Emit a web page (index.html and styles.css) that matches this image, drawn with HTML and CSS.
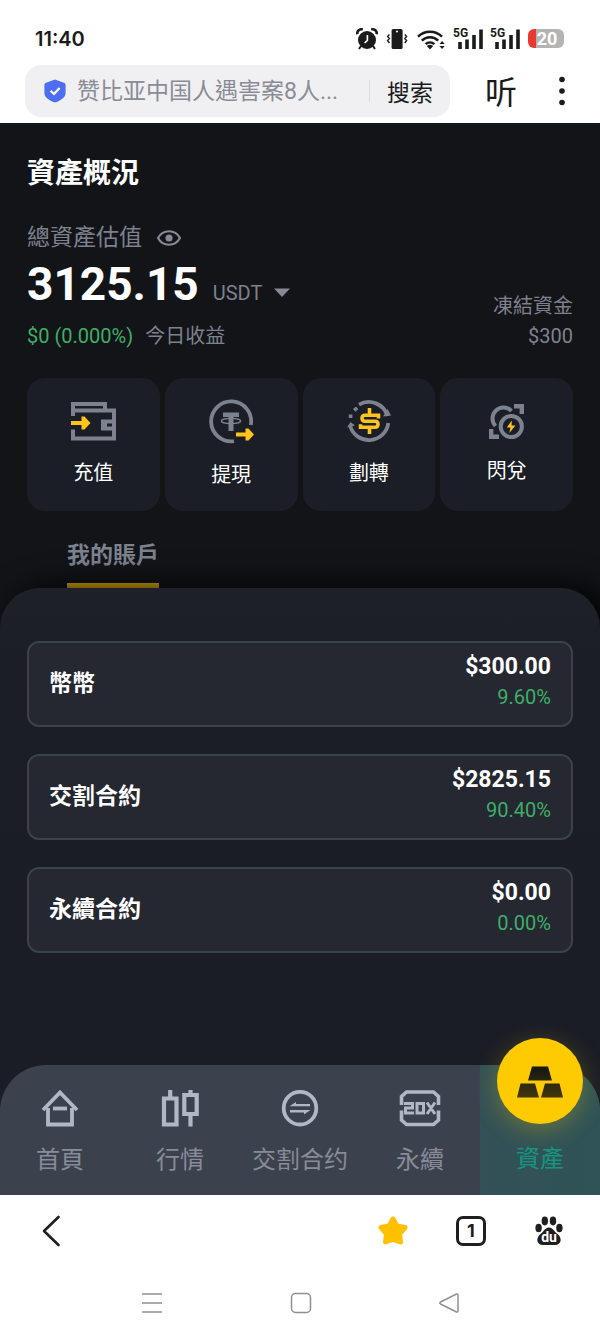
FILE: index.html
```html
<!DOCTYPE html>
<html lang="zh-Hant">
<head>
<meta charset="utf-8">
<meta name="viewport" content="width=device-width, initial-scale=1">
<title>資產概況</title>
<link rel="stylesheet" href="styles.css">
</head>
<body>
<header class="browser-top">
  <div class="status">
    <span class="clock">11:40</span>
    <div class="status-icons">
      <svg width="22" height="22" viewBox="0 0 22 22"><circle cx="11" cy="12" r="9" fill="#1b1b1b"/><path d="M1.400 6.200A4 4 0 0 1 6.800 1.600M20.600 6.200a4 4 0 0 0-5.400-4.600" fill="none" stroke="#1b1b1b" stroke-width="2.600"/><path d="M5 18l-2 3M17 18l2 3" stroke="#1b1b1b" stroke-width="2"/><path d="M11.400 7v5.400L8.600 15" fill="none" stroke="#fff" stroke-width="1.600"/></svg>
      <svg width="22" height="22" viewBox="0 0 22 22"><rect x="5.600" y="1" width="11" height="20" rx="1.600" fill="#1b1b1b"/><circle cx="11" cy="3.600" r="1" fill="#fff"/><path d="M3.400 6.500l-1.800 2 1.800 2-1.800 2 1.800 2.500M18.800 6.500l1.800 2-1.800 2 1.800 2-1.800 2.500" fill="none" stroke="#1b1b1b" stroke-width="1.400"/></svg>
      <svg width="30" height="22" viewBox="0 0 30 22"><path d="M2 8.600a17 17 0 0 1 24 0M5.800 12.600a11.500 11.500 0 0 1 16.400 0M9.600 16.200a6.500 6.500 0 0 1 8.800 0" fill="none" stroke="#1b1b1b" stroke-width="2.500"/><path d="M10.800 18a5 5 0 0 1 6.400 0L14 21.500zM23.500 16l2.600-3 2.600 3zM23.500 18l2.600 3 2.600-3z" fill="#1b1b1b"/></svg>
      <span class="signal"><span class="signal-tag">5G</span><svg width="28" height="22" viewBox="0 0 28 22"><path d="M5 14v7M12 11.500V21M19 7v14M26 1.500V21" stroke="#1b1b1b" stroke-width="3.600"/></svg></span>
      <span class="signal"><span class="signal-tag">5G</span><svg width="28" height="22" viewBox="0 0 28 22"><path d="M5 14v7M12 11.500V21M19 7v14M26 1.500V21" stroke="#1b1b1b" stroke-width="3.600"/></svg></span>
      <span class="battery"><span class="battery-text">20</span></span>
    </div>
  </div>
  <div class="address">
    <form class="search">
      <svg width="24" height="26" viewBox="0 0 24 26"><path d="M12 1.500l9 3.200q1.600.6 1.600 2.200v7.600c0 4.400-3 6.600-8.200 9.200q-2.400 1.200-4.800 0C4.400 21.100 1.400 18.900 1.400 14.500V6.900q0-1.600 1.600-2.200z" fill="#4e6ef2"/><path d="M7.600 12.800l3.400 3.200 5.600-6" fill="none" stroke="#fff" stroke-width="2.200"/></svg>
      <input class="search-input" type="text" aria-label="搜索内容" value="赞比亚中国人遇害案8人...">
      <button class="search-button" type="button">搜索</button>
    </form>
    <button class="listen" type="button">听</button>
    <button class="plain" type="button" aria-label="更多"><svg width="8" height="30" viewBox="0 0 8 30"><g fill="#1b1b1b"><circle cx="4" cy="3.500" r="2.800"/><circle cx="4" cy="15" r="2.800"/><circle cx="4" cy="26.500" r="2.800"/></g></svg></button>
  </div>
</header>

<main class="app">
  <section class="overview">
    <h1 class="title">資產概況</h1>
    <div class="label-row">
      <span>總資產估值</span>
      <button class="plain" type="button" aria-label="顯示金額"><svg width="26" height="18" viewBox="0 0 26 18"><path d="M2 9C7 0 19 0 24 9 19 18 7 18 2 9z" fill="none" stroke="#858a96" stroke-width="2.200"/><circle cx="13" cy="9" r="3.600" fill="#858a96"/></svg></button>
    </div>
    <div class="totals">
      <div class="total-main">
        <div class="amount-row">
          <strong class="amount">3125.15</strong>
          <button class="currency" type="button">USDT <svg width="18" height="10" viewBox="0 0 18 10"><path d="M1 .5h16L9 9z" fill="#858a96"/></svg></button>
        </div>
        <div class="profit"><span class="up">$0 (0.000%)</span><span>今日收益</span></div>
      </div>
      <div class="frozen"><span>凍結資金</span><span>$300</span></div>
    </div>
    <div class="actions">
      <a class="action" href="#deposit">
        <svg class="action-icon" viewBox="0 0 46 46"><g fill="none" stroke="#7d828f" stroke-width="4"><path d="M3 17V5h32v6"/><path d="M3 11.500h41v28H3v-9"/><path d="M44 22.500H33v7h11"/></g><path d="M33 22.500h4v7h-4z" fill="#7d828f"/><path d="M1 22h10.500v-4.500h3l6 6.500-6 6.500h-3V26H1z" fill="#fcc41c"/></svg>
        <span>充值</span>
      </a>
      <a class="action withdraw" href="#withdraw">
        <svg class="action-icon" viewBox="0 0 46 46"><path d="M26 42.200A20 20 0 1 1 42.800 26" fill="none" stroke="#7d828f" stroke-width="3.800"/><path d="M15 13.500h16v4.500h-5.500V32h-5V18H15z" fill="#7d828f"/><ellipse cx="23" cy="22" rx="9.600" ry="2.600" fill="none" stroke="#7d828f" stroke-width="1.400"/><path d="M28 33.500h9.500v-4h3l5.500 6-5.500 6h-3v-4H28z" fill="#fcc41c"/></svg>
        <span>提現</span>
      </a>
      <a class="action" href="#transfer">
        <svg class="action-icon" viewBox="0 0 46 46"><g fill="none" stroke="#7d828f" stroke-width="3.800"><path d="M13 5.600A19.500 19.500 0 0 1 41.500 17"/><path d="M42.300 24A19.500 19.500 0 0 1 4.200 27"/></g><path d="M37 17.500l8-1-3.500-6.500M9 26.500l-8 2L4.500 23z" fill="#7d828f"/><path d="M7 10l3-2.500 2.300 2.700-3 2.500zM2.800 15.500h3.600v3.600H2.800z" fill="#7d828f"/><path d="M32.500 19.500V16.300H19q-3 0-3 3t3 3h10q3 0 3 3t-3 3H14.500v-3M23.500 9v7M23.500 28v7" fill="none" stroke="#fcc41c" stroke-width="3.600"/></svg>
        <span>劃轉</span>
      </a>
      <a class="action swap" href="#swap">
        <svg class="action-icon" viewBox="0 0 46 46"><g fill="none" stroke="#7d828f" stroke-width="4"><circle cx="27.300" cy="27.500" r="10.600"/><path d="M11.500 27A10.500 10.500 0 1 1 27.500 12"/><path d="M30 7.200h7.800V15M7.200 30v7.800H15" stroke-width="4.400"/></g><path d="M27.800 21.500l-5 7h3.600l-1 5.500 6-7.500h-3.800z" fill="#fcc41c"/></svg>
        <span>閃兌</span>
      </a>
    </div>
    <div class="tabs"><button class="tab" type="button">我的賬戶</button></div>
  </section>

  <section class="accounts">
    <a class="account" href="#spot"><span class="account-name">幣幣</span><span class="account-values"><strong class="account-amount">$300.00</strong><span class="up">9.60%</span></span></a>
    <a class="account" href="#delivery"><span class="account-name">交割合約</span><span class="account-values"><strong class="account-amount">$2825.15</strong><span class="up">90.40%</span></span></a>
    <a class="account" href="#perpetual"><span class="account-name">永續合約</span><span class="account-values"><strong class="account-amount">$0.00</strong><span class="up">0.00%</span></span></a>
  </section>

  <nav class="app-nav">
    <a class="nav-item" href="#home">
      <svg width="40" height="40" viewBox="0 0 40 40"><g fill="none" stroke="#b1b7c4" stroke-width="3.800"><path d="M3 22L20 4.500 37 22"/><path d="M8 20v16.500h24V20"/><path d="M13 20.500h14"/></g></svg>
      <span>首頁</span>
    </a>
    <a class="nav-item" href="#market">
      <svg width="40" height="40" viewBox="0 0 40 40"><g fill="none" stroke="#b1b7c4" stroke-width="4.200"><path d="M4 10.500h12.500v26H4zM10.200 2v8M24.300 7h12.400v19H24.300zM30.500 2v5M30.500 26v12.500"/></g></svg>
      <span>行情</span>
    </a>
    <a class="nav-item" href="#contracts">
      <svg width="40" height="40" viewBox="0 0 40 40"><circle cx="20" cy="20.200" r="16.300" fill="none" stroke="#b1b7c4" stroke-width="3.800"/><path d="M9.500 18.300l6.500-4.300v2h14v2.300zM30.500 22l-6.500 4.500v-2H10V22z" fill="#b1b7c4"/></svg>
      <span>交割合约</span>
    </a>
    <a class="nav-item" href="#leverage">
      <svg width="42" height="40" viewBox="0 0 42 40"><g fill="none" stroke="#b1b7c4"><path d="M2.500 17V8.500l5-4.500h27l5 4.500V17M2.500 22.500v9.500l5 4.500h27l5-4.500v-9.500" stroke-width="3.600"/><path d="M5 15.500h8.500v4.600H6.500v5H15M18 15.500h6.500v9.600H18zM28 14.500l8 11.500M36 14.500L28 26" stroke-width="3"/></g></svg>
      <span>永續</span>
    </a>
    <a class="nav-item active" href="#assets" aria-current="page">
      <span class="gold"><svg width="48" height="32" viewBox="0 0 48 32"><defs><linearGradient id="bar" x1="0" y1="0" x2="0" y2="1"><stop offset="0" stop-color="#16160f"/><stop offset="1" stop-color="#42360e"/></linearGradient></defs><path d="M16 .5h16l4 14H12zM4.500 17.500H19l4 14H1zM29 17.500h14.500l3.500 14H25z" fill="url(#bar)"/></svg></span>
      <span>資產</span>
    </a>
  </nav>
</main>

<footer>
  <div class="browser-bar">
    <button class="plain back" type="button" aria-label="返回"><svg width="20" height="32" viewBox="0 0 20 32"><path d="M17.500 2L3 16l14.500 14" fill="none" stroke="#1f1f1f" stroke-width="2.600" stroke-linecap="round" stroke-linejoin="round"/></svg></button>
    <button class="plain" type="button" aria-label="收藏"><svg width="32" height="32" viewBox="0 0 32 32"><path d="M16 4l3.800 7 8.200 1.500-5.500 6.300 1 8.200-7.500-2.500L8.500 27l1-8.200L4 12.500 12.200 11z" fill="#ffc000" stroke="#ffc000" stroke-width="5" stroke-linejoin="round"/></svg></button>
    <button class="tab-count" type="button">1</button>
    <button class="plain" type="button" aria-label="百度首頁"><span class="paw"><svg width="28" height="30" viewBox="0 0 28 30"><g fill="#1f1f1f"><ellipse cx="3.600" cy="12" rx="3.200" ry="4.200"/><ellipse cx="9.800" cy="5" rx="3.200" ry="4.400"/><ellipse cx="18" cy="5" rx="3.200" ry="4.400"/><ellipse cx="24.400" cy="12" rx="3.200" ry="4.200"/><path d="M14 11.500c4 0 5 4 8.500 6.500 5 4 4 11-2.500 11H8c-6.500 0-7.500-7-2.500-11C9 15.500 10 11.500 14 11.500z"/></g></svg><span class="paw-text">du</span></span></button>
  </div>
  <div class="system-bar">
    <button class="plain" type="button" aria-label="最近"><svg width="22" height="22" viewBox="0 0 22 22"><path d="M1 2h20M1 11h20M1 20h20" stroke="#909090" stroke-width="1.600"/></svg></button>
    <button class="plain" type="button" aria-label="主畫面"><svg width="22" height="22" viewBox="0 0 22 22"><rect x="1.500" y="1.500" width="19" height="19" rx="4" fill="none" stroke="#909090" stroke-width="1.500"/></svg></button>
    <button class="plain" type="button" aria-label="返回上一頁"><svg width="22" height="22" viewBox="0 0 22 22"><path d="M18.500 2Q20 1.500 20 3v16q0 1.500-1.500 1L2.500 12q-1.500-1 0-2z" fill="none" stroke="#909090" stroke-width="1.500"/></svg></button>
  </div>
</footer>
</body>
</html>
```

FILE: styles.css
```css
* { box-sizing: border-box; }

body {
  margin: 0;
  min-height: 100vh;
  display: flex;
  flex-direction: column;
  background: #fff;
  color: #fff;
  font-family: Roboto, "Noto Sans CJK TC", sans-serif;
  font-size: 20px;
  line-height: 30px;
}

svg { display: block; }
a { color: inherit; text-decoration: none; }
button { font: inherit; border: 0; background: none; padding: 0; color: inherit; }
.plain { display: block; }

/* Status bar and address bar */
.browser-top { color: #1b1b1b; padding-bottom: 6px; }

.status {
  display: flex;
  align-items: center;
  justify-content: space-between;
  height: 65px;
  padding: 12px 36px 0 35px;
}

.clock { font-family: Inter, sans-serif; font-size: 20px; font-weight: 600; }
.status-icons { display: flex; align-items: center; gap: 8px; }
.signal { position: relative; padding-left: 1px; }

.signal-tag {
  position: absolute;
  top: -1px;
  left: -1px;
  font-size: 12px;
  line-height: 12px;
  font-weight: 700;
}

.battery {
  display: flex;
  align-items: center;
  justify-content: center;
  width: 36px;
  height: 19px;
  padding-left: 2px;
  border-radius: 6px;
  background: linear-gradient(90deg, #e83a2e 8px, #b4b4b4 8px);
  color: #fff;
}

.battery-text { font-size: 18px; line-height: 19px; font-weight: 700; }

.address { display: flex; align-items: center; padding: 0 34px 0 25px; }

.search {
  flex: 1;
  min-width: 0;
  display: flex;
  align-items: center;
  height: 52px;
  padding: 0 17px 0 18px;
  border-radius: 16px;
  background: #f0f0f3;
}

.search-input {
  flex: 1;
  min-width: 0;
  padding: 2px 0 0 10px;
  border: 0;
  background: none;
  color: #8a8c95;
  font: 23px/32px Roboto, "Noto Sans CJK SC", sans-serif;
}

.search-button {
  padding-left: 17px;
  border-left: 1px solid #dcdce0;
  font: 23px/22px "Noto Sans CJK SC", sans-serif;
}

.listen { margin: 0 41px 0 35px; padding-bottom: 3px; font: 32px/40px "Noto Sans CJK SC", sans-serif; }

/* Asset overview */
.app { flex: 1; display: flex; flex-direction: column; background: #121418; }
.overview { padding: 31px 27px 0; color: #7d828e; }
.title { margin: 0; color: #fff; font-size: 28px; line-height: 40px; font-weight: 700; }

.label-row {
  display: flex;
  align-items: center;
  gap: 14px;
  margin-top: 28px;
  font-size: 23px;
  line-height: 32px;
}

.totals { display: flex; justify-content: space-between; align-items: flex-end; }
.amount-row { display: flex; align-items: baseline; gap: 14px; }
.amount { color: #fff; font-size: 46px; line-height: 60px; }
.currency { display: flex; align-items: center; gap: 11px; }
.profit { display: flex; gap: 12px; margin-top: 7px; }
.up { color: #3fae67; }
.frozen { display: flex; flex-direction: column; text-align: right; }

.actions { display: grid; grid-template-columns: repeat(4, 1fr); gap: 5px; margin-top: 27px; }

.action {
  display: flex;
  flex-direction: column;
  align-items: center;
  justify-content: center;
  gap: 13px;
  height: 133px;
  padding-bottom: 2px;
  border-radius: 18px;
  background: #1b1e26;
  color: #fff;
}

.withdraw { gap: 15px; padding-bottom: 0; }
.swap { gap: 11px; padding-bottom: 4px; }
.action-icon { width: 46px; height: 46px; }

.tabs { padding-left: 40px; margin-top: 29px; }

.tab {
  padding-bottom: 11px;
  border-bottom: 5px solid #e8b60e;
  font-size: 23px;
  line-height: 32px;
  font-weight: 700;
}

/* Accounts */
.accounts {
  flex: 1;
  display: flex;
  flex-direction: column;
  gap: 27px;
  padding: 53px 27px 40px;
  border-radius: 40px 40px 0 0;
  background: linear-gradient(#1e2127, #1b1e27 60px, #1a1d26);
  box-shadow: 12px 0 32px #000;
  clip-path: inset(-40px 0 0 0);
}

.account {
  display: flex;
  align-items: center;
  justify-content: space-between;
  padding: 0 20px;
  border: 2px solid #3a424b;
  border-radius: 12px;
  background: #252731;
}

.account-name { font-size: 23px; line-height: 32px; font-weight: 700; }
.account-values { display: flex; flex-direction: column; padding: 9px 0 13px; text-align: right; }
.account-amount { font-size: 23px; }

/* App navigation */
.app-nav {
  display: grid;
  grid-template-columns: repeat(5, 1fr);
  border-radius: 46px 46px 0 0;
  background: #3c424d;
  box-shadow: 0 -46px 0 #1a1d26;
  clip-path: inset(-46px 0 0 0);
}

.nav-item {
  display: flex;
  flex-direction: column;
  align-items: center;
  gap: 15px;
  height: 130px;
  padding-top: 23px;
  color: #878c98;
  font-size: 24px;
  line-height: 34px;
}

.active {
  padding-top: 0;
  gap: 18px;
  border-top-right-radius: 46px;
  background: linear-gradient(90deg, #335156, #2f5356);
  color: #159580;
}

.gold {
  display: flex;
  align-items: center;
  justify-content: center;
  width: 86px;
  height: 86px;
  margin-top: -27px;
  padding-top: 2px;
  border-radius: 50%;
  background: #fecb02;
  box-shadow: 0 6px 24px rgba(254, 203, 2, 0.28);
}

/* Browser and system bars */
.browser-bar { display: flex; align-items: center; height: 72px; padding: 0 37px 0 41px; }
.back { margin-right: auto; }

.tab-count {
  width: 30px;
  height: 30px;
  margin: 0 49px 0 47px;
  border: 3px solid #1f1f1f;
  border-radius: 7px;
  color: #1f1f1f;
  font: 700 18px/24px Inter, sans-serif;
}

.paw { position: relative; display: block; }

.paw-text {
  position: absolute;
  right: 0;
  bottom: 2px;
  left: 0;
  color: #fff;
  font-size: 14px;
  line-height: 14px;
  font-weight: 700;
  text-align: center;
}

.system-bar { display: flex; justify-content: space-between; padding: 25px 140px 26px 141px; }
```
